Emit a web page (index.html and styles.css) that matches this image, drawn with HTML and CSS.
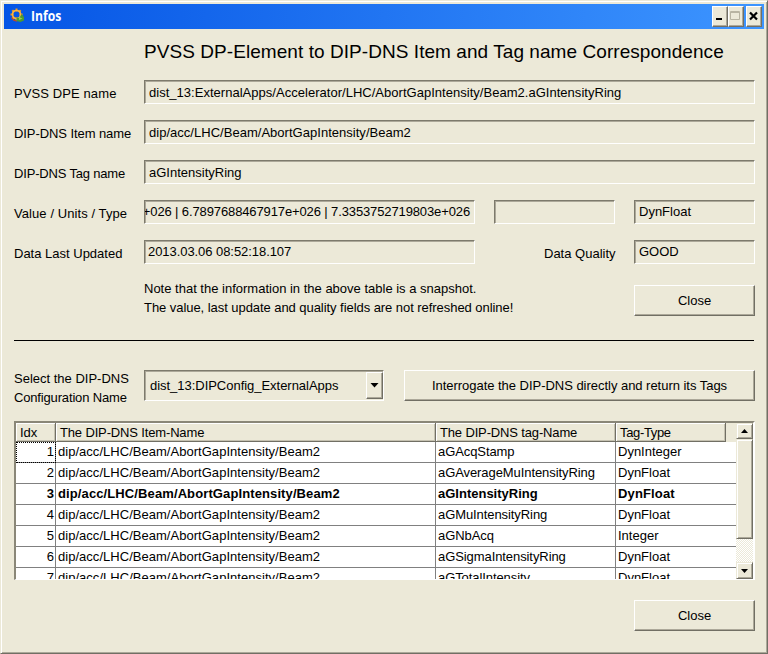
FILE: index.html
```html
<!DOCTYPE html>
<html lang="en">
<head>
<meta charset="utf-8">
<title>Infos</title>
<link rel="stylesheet" href="styles.css">
</head>
<body>
<div class="window">
  <header class="titlebar">
    <svg class="app-icon" width="16" height="16" viewBox="0 0 16 16">
      <g stroke="#f39a22" stroke-width="2" fill="none">
        <path d="M6.500 0.500v3M6.500 9.500v3M0.500 6.500h3M9.500 6.500h3M2.300 2.300l2 2M10.700 2.300l-2 2M2.300 10.700l2-2"/>
        <circle cx="6.500" cy="6.500" r="4" stroke="#ffb53c" stroke-width="1.600"/>
      </g>
      <path d="M1.500 9.500l2 2.500 3.500 1.200" stroke="#c8451d" stroke-width="1.200" fill="none"/>
      <path d="M6.500 9.500l3 0.500 2-4 2.500 3v3.500l-3.500 1.500-4-1z" fill="#4c9a32"/>
      <path d="M9 9l3.500 1.500-3.500 1.500z" fill="#9bd34e"/>
    </svg>
    <span class="caption">Infos</span>
    <div class="controls">
      <span class="control"><svg width="13" height="18"><path d="M3 12h6" stroke="#000" stroke-width="2"/></svg></span>
      <span class="control"><svg width="13" height="18"><path d="M1.500 4.500h9v8h-9zM1 5.500h10" stroke="#b8b4a2" fill="none"/></svg></span>
      <span class="control close-control"><svg width="13" height="18"><path d="M3 5.500l7 7M10 5.500l-7 7" stroke="#000" stroke-width="2.200"/></svg></span>
    </div>
  </header>

  <main class="content">
    <h1>PVSS DP-Element to DIP-DNS Item and Tag name Correspondence</h1>

    <section class="details">
      <div class="row"><span class="label l-dpe">PVSS DPE name</span><div class="field grow"><span class="f-dpe">dist_13:ExternalApps/Accelerator/LHC/AbortGapIntensity/Beam2.aGIntensityRing</span></div></div>
      <div class="row"><span class="label l-item">DIP-DNS Item name</span><div class="field grow"><span class="f-item">dip/acc/LHC/Beam/AbortGapIntensity/Beam2</span></div></div>
      <div class="row"><span class="label l-tag">DIP-DNS Tag name</span><div class="field grow"><span class="f-tag">aGIntensityRing</span></div></div>
      <div class="row">
        <span class="label l-value">Value / Units / Type</span>
        <div class="field value"><span class="f-value">+026 | 6.7897688467917e+026 | 7.3353752719803e+026</span></div>
        <div class="field units"></div>
        <div class="field small"><span class="f-type">DynFloat</span></div>
      </div>
      <div class="row">
        <span class="label l-updated">Data Last Updated</span>
        <div class="field updated"><span class="f-date">2013.03.06 08:52:18.107</span></div>
        <span class="quality">Data Quality</span>
        <div class="field small"><span class="f-good">GOOD</span></div>
      </div>
    </section>

    <section class="notice">
      <p><span class="n-one">Note that the information in the above table is a snapshot.</span><br><span class="n-two">The value, last update and quality fields are not refreshed online!</span></p>
      <button class="button close" type="button">Close</button>
    </section>

    <hr>

    <section class="select-row">
      <p class="select-label"><span class="s-one">Select the DIP-DNS</span><br><span class="s-two">Configuration Name</span></p>
      <div class="combo"><span class="combo-text">dist_13:DIPConfig_ExternalApps</span><span class="combo-arrow"><svg width="9" height="5"><path d="M0.500 0h8l-4 4.500z"/></svg></span></div>
      <button class="button query" type="button">Interrogate the DIP-DNS directly and return its Tags</button>
    </section>

    <section class="grid">
      <div class="grid-view">
        <div class="grid-head"><span class="h-idx">Idx</span><span class="h-item">The DIP-DNS Item-Name</span><span class="h-tag">The DIP-DNS tag-Name</span><span class="h-type">Tag-Type</span></div>
        <div class="grid-row"><span class="idx focus">1</span><span class="item">dip/acc/LHC/Beam/AbortGapIntensity/Beam2</span><span class="tag">aGAcqStamp</span><span class="type">DynInteger</span></div>
        <div class="grid-row"><span class="idx">2</span><span class="item">dip/acc/LHC/Beam/AbortGapIntensity/Beam2</span><span class="tag">aGAverageMuIntensityRing</span><span class="type">DynFloat</span></div>
        <div class="grid-row current"><span class="idx">3</span><span class="item">dip/acc/LHC/Beam/AbortGapIntensity/Beam2</span><span class="tag">aGIntensityRing</span><span class="type">DynFloat</span></div>
        <div class="grid-row"><span class="idx">4</span><span class="item">dip/acc/LHC/Beam/AbortGapIntensity/Beam2</span><span class="tag">aGMuIntensityRing</span><span class="type">DynFloat</span></div>
        <div class="grid-row"><span class="idx">5</span><span class="item">dip/acc/LHC/Beam/AbortGapIntensity/Beam2</span><span class="tag">aGNbAcq</span><span class="type">Integer</span></div>
        <div class="grid-row"><span class="idx">6</span><span class="item">dip/acc/LHC/Beam/AbortGapIntensity/Beam2</span><span class="tag">aGSigmaIntensityRing</span><span class="type">DynFloat</span></div>
        <div class="grid-row"><span class="idx">7</span><span class="item">dip/acc/LHC/Beam/AbortGapIntensity/Beam2</span><span class="tag">aGTotalIntensity</span><span class="type">DynFloat</span></div>
      </div>
      <div class="scrollbar">
        <span class="scroll-button up"><svg width="7" height="4"><path d="M3.500 0l3.500 4h-7z"/></svg></span>
        <span class="thumb"></span>
        <span class="track"></span>
        <span class="scroll-button"><svg width="7" height="4"><path d="M0 0h7l-3.500 4z"/></svg></span>
      </div>
    </section>

    <footer><button class="button close" type="button">Close</button></footer>
  </main>
</div>
</body>
</html>
```
FILE: styles.css
```css
* { box-sizing: border-box; }

body {
  margin: 0;
  font: 13px/19px "Liberation Sans", Arial, sans-serif;
  color: #000;
  background: #ece9d8;
}

.window {
  width: 768px;
  height: 654px;
  padding: 2px;
  overflow: hidden;
  background: #ece9d8;
  border: 1px solid #716f64;
  border-top-color: #ece9d8;
  border-left-color: #ece9d8;
  box-shadow: inset 1px 1px #fff, inset -1px -1px #aca899;
}

.titlebar {
  display: flex;
  align-items: center;
  height: 25px;
  margin: 1px 1px 0;
  padding: 0 2px 0 6px;
  background: linear-gradient(to right, #0555e5, #3d95ff);
}
.app-icon { margin-top: -1px; }
.caption {
  margin: -1px 0 0 5px;
  color: #fff;
  font: bold 13.5px/20px "Open Sans", sans-serif;
  transform: scaleX(0.9);
  transform-origin: left;
}
.controls { display: flex; margin-left: auto; }
.control {
  display: flex;
  width: 16px;
  height: 21px;
  background: #ece9d8;
  border: 1px solid;
  border-color: #fff #716f64 #716f64 #fff;
  box-shadow: inset -1px -1px #aca899;
}
.close-control { margin-left: 2px; }

.content { padding: 10px 11px 0; }

h1 {
  margin: 0 0 15px 130px;
  font-size: 19px;
  font-weight: 400;
  line-height: 26px;
  letter-spacing: 0.06px;
  white-space: nowrap;
}

.details { display: grid; row-gap: 16px; }
.row { display: flex; height: 24px; width: 741px; }
.label { width: 130px; padding-top: 4px; white-space: nowrap; }
.l-dpe { letter-spacing: 0.1px; }
.l-item { letter-spacing: -0.08px; }
.l-tag { letter-spacing: -0.18px; }
.l-value { letter-spacing: 0.08px; }
.field {
  height: 24px;
  padding: 1px 4px;
  overflow: hidden;
  line-height: 20px;
  white-space: nowrap;
  border: 1px solid;
  border-color: #7d7a6c #fff #fff #7d7a6c;
  box-shadow: inset 1px 1px #aca899;
}
.grow { flex: 1; padding-top: 2px; }
.f-dpe, .f-item { letter-spacing: 0.025px; }
.value { display: flex; justify-content: flex-end; width: 331px; padding-left: 0; }
.f-value { letter-spacing: -0.12px; }
.updated { width: 331px; padding-left: 3px; }
.f-date { letter-spacing: -0.06px; }
.units { width: 121px; margin-left: 19px; }
.small { width: 121px; margin-left: auto; }
.quality { width: 73px; margin-left: 69px; padding-top: 4px; white-space: nowrap; }

.notice { display: flex; width: 741px; margin: 15px 0 0; }
.notice p { margin: 0 0 0 130px; white-space: nowrap; }
.notice .close { margin: 6px 0 0 auto; }
.n-two { letter-spacing: -0.055px; }

.button {
  height: 31px;
  padding: 0 0 1px;
  font: inherit;
  color: #000;
  background: #ece9d8;
  border: 1px solid;
  border-color: #fff #716f64 #716f64 #fff;
  box-shadow: inset -1px -1px #aca899;
  white-space: nowrap;
}
.close { width: 121px; }

hr { width: 740px; height: 1px; margin: 23px 0 29px; border: 0; background: #000; }

.select-row { display: flex; width: 741px; height: 32px; }
.select-label { width: 130px; margin: -1px 0 0; white-space: nowrap; }
.s-two { letter-spacing: -0.16px; }
.combo {
  display: flex;
  width: 240px;
  height: 31px;
  padding: 1px 0 0 5px;
  border: 1px solid;
  border-color: #7d7a6c #fff #fff #7d7a6c;
  box-shadow: inset 1px 1px #aca899;
}
.combo-text { line-height: 28px; letter-spacing: -0.03px; white-space: nowrap; }
.combo-arrow {
  display: grid;
  place-items: center;
  width: 17px;
  height: 27px;
  margin-left: auto;
  border: 1px solid;
  border-color: #fff #716f64 #716f64 #fff;
  box-shadow: inset -1px -1px #aca899;
}
.query { width: 351px; margin-left: auto; letter-spacing: -0.03px; }

.grid {
  display: flex;
  width: 741px;
  height: 159px;
  margin-top: 19px;
  border: solid;
  border-width: 2px 2px 1px;
  border-color: #8a8778 #fff #fff #8a8778;
  overflow: hidden;
}
.grid-view { width: 720px; overflow: hidden; background: #fff; }
.grid-head { display: flex; height: 19px; background: #ece9d8; }
.grid-head span {
  height: 19px;
  padding-left: 4px;
  overflow: hidden;
  line-height: 19px;
  white-space: nowrap;
  border-right: 1px solid #716f64;
  border-bottom: 1px solid #716f64;
  box-shadow: inset 1px 1px #fff, inset -1px -1px #c5c1b0;
}
.grid-row { display: flex; height: 21px; }
.grid-row span {
  padding-left: 2px;
  line-height: 20px;
  white-space: nowrap;
  border-right: 1px solid #808080;
  border-bottom: 1px solid #808080;
}
.grid-head .h-idx, .grid-row .idx { width: 40px; }
.grid-head .h-item, .grid-row .item { width: 380px; }
.grid-head .h-tag, .grid-row .tag { width: 180px; }
.grid-head .h-type { width: 110px; }
.grid-row .type { width: 120px; border-right: 0; }
.h-item, .h-tag { letter-spacing: -0.15px; }
.h-type { letter-spacing: -0.35px; }
.grid-row .item { letter-spacing: 0.03px; }
.grid-row .tag { letter-spacing: -0.08px; }
.grid-row .idx { padding-right: 1px; text-align: right; }
.grid-row .focus { outline: 1px dotted #000; outline-offset: -1px; }
.current { font-weight: 700; }
.grid-row.current .item { letter-spacing: 0.11px; }
.grid-row.current .tag { letter-spacing: 0; }
.grid-row.current .type { letter-spacing: 0.15px; }

.scrollbar { display: flex; flex-direction: column; width: 17px; }
.scroll-button, .thumb {
  display: grid;
  flex: none;
  place-items: center;
  height: 17px;
  background: #ece9d8;
  border: 1px solid;
  border-color: #ece9d8 #716f64 #716f64 #ece9d8;
  box-shadow: inset 1px 1px #fff, inset -1px -1px #aca899;
}
.up { height: 16px; }
.thumb { height: 100px; }
.track { flex: 1; background: repeating-conic-gradient(#fff 0 25%, #ece9d8 0 50%) 0 0 / 2px 2px; }

footer { display: flex; justify-content: flex-end; width: 741px; margin-top: 20px; }
```
